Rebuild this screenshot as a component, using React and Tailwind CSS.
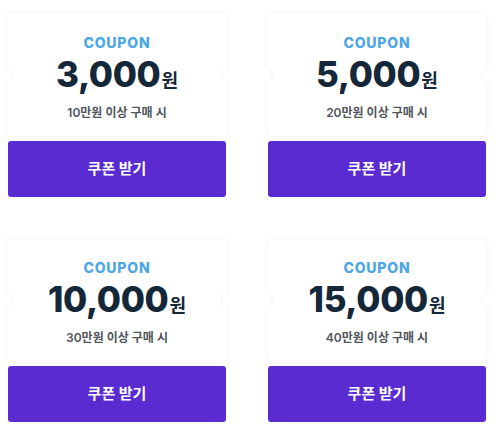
import React from "react";

const coupons = [
  { amount: "3,000", min: "10만원 이상 구매 시" },
  { amount: "5,000", min: "20만원 이상 구매 시" },
  { amount: "10,000", min: "30만원 이상 구매 시" },
  { amount: "15,000", min: "40만원 이상 구매 시" },
];

function CouponCard({ coupon }) {
  return (
    <div className="flex flex-col">
      {/* ticket body */}
      <div className="relative h-[122px] bg-white rounded-[3px] shadow-[0_0_6px_rgba(0,0,0,0.06)] flex flex-col items-center pt-[21px]">
        <span className="absolute left-[-6px] top-[55px] w-3 h-3 rounded-full bg-white shadow-[inset_-2px_0_2px_rgba(0,0,0,0.035)]" />
        <span className="absolute right-[-6px] top-[55px] w-3 h-3 rounded-full bg-white shadow-[inset_2px_0_2px_rgba(0,0,0,0.035)]" />
        <p className="text-[14px] leading-[16px] font-extrabold tracking-[0.06em] text-[#4aa6e6]">
          COUPON
        </p>
        <p className="mt-[6px] flex items-baseline text-[#14283a] leading-[34px]">
          <span className="text-[35px] font-extrabold tracking-[-0.01em]">{coupon.amount}</span>
          <span className="text-[18px] font-bold ml-[1px]">원</span>
        </p>
        <p className="mt-[8px] text-[12px] leading-[14px] font-semibold text-[#50555b]">
          {coupon.min}
        </p>
      </div>
      <button className="mt-[5px] h-[56px] w-full rounded-[3px] bg-[#5a2bd1] text-white text-[15px] font-bold">
        쿠폰 받기
      </button>
    </div>
  );
}

export default function App() {
  return (
    <div
      className="w-[500px] h-[437px] bg-white pl-[8px] pr-[14px] pt-[14px]"
      style={{ fontFamily: "Inter, 'Noto Sans CJK KR', sans-serif" }}
    >
      <div className="grid grid-cols-2 gap-x-[42px] gap-y-[42px]">
        {coupons.map((c) => (
          <CouponCard key={c.amount} coupon={c} />
        ))}
      </div>
    </div>
  );
}
